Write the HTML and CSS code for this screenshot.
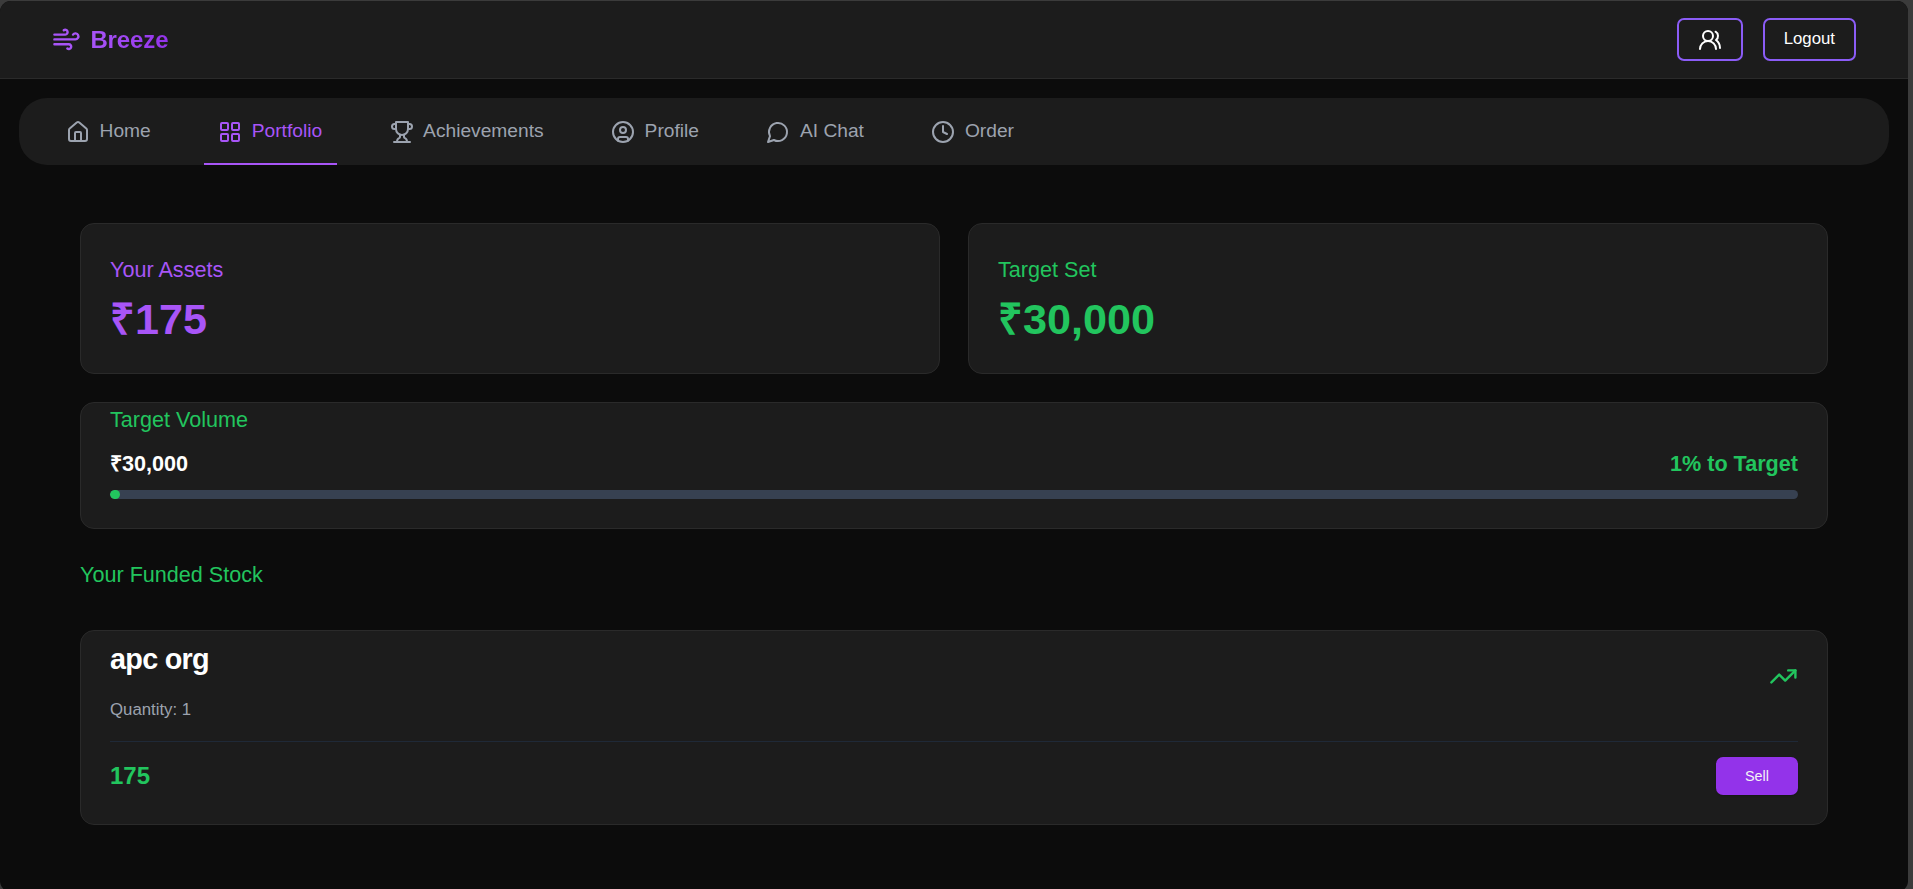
FILE: index.html
```
<!DOCTYPE html>
<html lang="en">
<head>
  <meta charset="UTF-8">
  <meta name="viewport" content="width=device-width, initial-scale=1.0">
  <title>Breeze - Portfolio</title>
  <link rel="stylesheet" href="styles.css">
</head>
<body>
  <div class="app">
    <header class="header">
      <div class="logo">
        <svg class="icon icon-lg" viewBox="0 0 24 24"><path d="M12.8 19.6A2 2 0 1 0 14 16H2"/><path d="M17.5 8a2.5 2.5 0 1 1 2 4H2"/><path d="M9.8 4.4A2 2 0 1 1 11 8H2"/></svg>
        <span class="logo-text">Breeze</span>
      </div>
      <div class="header-actions">
        <button class="btn-outline" aria-label="Users">
          <svg class="icon" viewBox="0 0 24 24"><path d="M18 21a8 8 0 0 0-16 0"/><circle cx="10" cy="8" r="5"/><path d="M22 20c0-3.37-2-6.5-4-8a5 5 0 0 0-.45-8.3"/></svg>
        </button>
        <button class="btn-outline btn-logout">Logout</button>
      </div>
    </header>

    <nav class="nav">
      <a class="nav-item">
        <svg class="icon" viewBox="0 0 24 24"><path d="M15 21v-8a1 1 0 0 0-1-1h-4a1 1 0 0 0-1 1v8"/><path d="M3 10a2 2 0 0 1 .709-1.528l7-5.999a2 2 0 0 1 2.582 0l7 5.999A2 2 0 0 1 21 10v9a2 2 0 0 1-2 2H5a2 2 0 0 1-2-2z"/></svg>
        <span>Home</span>
      </a>
      <a class="nav-item active">
        <svg class="icon" viewBox="0 0 24 24"><rect x="3" y="3" width="7" height="7" rx="1"/><rect x="14" y="3" width="7" height="7" rx="1"/><rect x="14" y="14" width="7" height="7" rx="1"/><rect x="3" y="14" width="7" height="7" rx="1"/></svg>
        <span>Portfolio</span>
      </a>
      <a class="nav-item">
        <svg class="icon" viewBox="0 0 24 24"><path d="M6 9H4.5a2.5 2.5 0 0 1 0-5H6"/><path d="M18 9h1.5a2.5 2.5 0 0 0 0-5H18"/><path d="M4 22h16"/><path d="M10 14.66V17c0 .55-.47.98-.97 1.21C7.85 18.75 7 20.24 7 22"/><path d="M14 14.66V17c0 .55.47.98.97 1.21C16.15 18.75 17 20.24 17 22"/><path d="M18 2H6v7a6 6 0 0 0 12 0V2Z"/></svg>
        <span>Achievements</span>
      </a>
      <a class="nav-item">
        <svg class="icon" viewBox="0 0 24 24"><circle cx="12" cy="12" r="10"/><circle cx="12" cy="10" r="3"/><path d="M7 20.662V19a2 2 0 0 1 2-2h6a2 2 0 0 1 2 2v1.662"/></svg>
        <span>Profile</span>
      </a>
      <a class="nav-item">
        <svg class="icon" viewBox="0 0 24 24"><path d="M7.9 20A9 9 0 1 0 4 16.1L2 22Z"/></svg>
        <span>AI Chat</span>
      </a>
      <a class="nav-item">
        <svg class="icon" viewBox="0 0 24 24"><circle cx="12" cy="12" r="10"/><polyline points="12 6 12 12 16 14"/></svg>
        <span>Order</span>
      </a>
    </nav>

    <main class="content">
      <div class="summary">
        <div class="card">
          <h3 class="card-title purple">Your Assets</h3>
          <p class="amount purple">₹175</p>
        </div>
        <div class="card">
          <h3 class="card-title">Target Set</h3>
          <p class="amount">₹30,000</p>
        </div>
      </div>

      <div class="card volume">
        <h3 class="card-title">Target Volume</h3>
        <div class="volume-row">
          <span class="volume-value">₹30,000</span>
          <span>1% to Target</span>
        </div>
        <div class="progress">
          <div class="progress-fill" style="width: 0.583%"></div>
        </div>
      </div>

      <h3 class="card-title">Your Funded Stock</h3>

      <div class="card stock">
        <div class="stock-top">
          <div>
            <h2 class="stock-name">apc org</h2>
            <p class="quantity">Quantity: 1</p>
          </div>
          <svg class="icon icon-lg" viewBox="0 0 24 24"><path d="M16 7h6v6"/><path d="m22 7-8.5 8.5-5-5L2 17"/></svg>
        </div>
        <div class="stock-bottom">
          <span class="price">175</span>
          <button class="btn-sell">Sell</button>
        </div>
      </div>
    </main>
  </div>
</body>
</html>
```
FILE: styles.css
```
* {
  box-sizing: border-box;
  margin: 0;
  padding: 0;
}
body {
  font-family: "Liberation Sans", Arial, sans-serif;
  background: #3b3b3b;
  padding: 1px 5px 0 0;
  height: 100vh;
  overflow: hidden;
}
.app {
  height: 891px;
  background: #0c0c0c;
  border-radius: 11px;
  overflow: hidden;
}
.icon {
  width: 24px;
  height: 24px;
  flex-shrink: 0;
  fill: none;
  stroke: currentColor;
  stroke-width: 2;
  stroke-linecap: round;
  stroke-linejoin: round;
}
.icon-lg {
  width: 28.8px;
  height: 28.8px;
}

/* header */
.header {
  display: flex;
  justify-content: space-between;
  align-items: center;
  height: 78px;
  padding: 0 52px;
  background: #1c1c1c;
  border-bottom: 1px solid #2a2a2a;
}
.logo {
  display: flex;
  align-items: center;
  gap: 9.6px;
  color: #a855f7;
}
.logo-text {
  font-size: 24px;
  line-height: 33.6px;
  font-weight: bold;
  letter-spacing: -0.1px;
  background: linear-gradient(to right, #a855f7, #9333ea);
  -webkit-background-clip: text;
  background-clip: text;
  color: transparent;
}
.header-actions {
  display: flex;
  gap: 20px;
}
.btn-outline {
  display: flex;
  align-items: center;
  height: 43px;
  padding: 0 19px;
  background: transparent;
  border: 2px solid #8b5cf6;
  border-radius: 7px;
  color: #fff;
  font-family: inherit;
  font-size: 16.8px;
}
.btn-logout {
  padding-bottom: 2px;
}

/* navigation */
.nav {
  display: flex;
  gap: 38.6px;
  height: 67px;
  margin: 19px 19px 0;
  padding: 0 32.6px;
  background: #1c1c1c;
  border-radius: 28px;
}
.nav-item {
  display: flex;
  align-items: center;
  gap: 9.6px;
  padding: 2px 14.4px 0;
  border-bottom: 2px solid transparent;
  color: #9ca3af;
  font-size: 19.2px;
}
.nav-item span {
  margin-bottom: 1px;
}
.nav-item.active {
  color: #a855f7;
  border-bottom-color: #a855f7;
}

/* content */
.content {
  margin: 58px 80px 0;
  color: #22c55e;
}
.summary {
  display: grid;
  grid-template-columns: 1fr 1fr;
  gap: 28px;
}
.card {
  padding: 28.8px 29px;
  background: #1c1c1c;
  border: 1px solid #2a2a2a;
  border-radius: 14px;
}
.card-title {
  font-size: 21.6px;
  line-height: 33.6px;
  font-weight: normal;
}
.purple {
  color: #a855f7;
}
.amount {
  margin: 8.6px 0 1px;
  font-size: 43.2px;
  line-height: 48px;
  font-weight: bold;
}
.volume {
  margin: 28.4px 0 28.8px;
  padding-top: 0;
}
.volume-row {
  display: flex;
  justify-content: space-between;
  margin: 10.4px 0 8.8px;
  font-size: 21.6px;
  line-height: 33.6px;
  font-weight: bold;
}
.volume-value {
  color: #fff;
}
.progress {
  height: 9.6px;
  background: #374151;
  border-radius: 5px;
  overflow: hidden;
}
.progress-fill {
  height: 100%;
  background: #22c55e;
  border-radius: 5px;
}

/* stock card */
.stock {
  margin-top: 38.4px;
  padding-top: 0;
}
.stock-top {
  display: flex;
  justify-content: space-between;
  align-items: center;
  padding-bottom: 18.6px;
}
.stock-name {
  color: #fff;
  font-size: 28.8px;
  line-height: 57px;
  letter-spacing: -0.025em;
}
.quantity {
  margin-top: 10.4px;
  color: #9ca3af;
  font-size: 16.8px;
  line-height: 24px;
}
.stock-bottom {
  display: flex;
  justify-content: space-between;
  align-items: center;
  padding-top: 15.4px;
  border-top: 1px solid #1f2937;
}
.price {
  font-size: 24px;
  font-weight: bold;
}
.btn-sell {
  width: 82px;
  height: 38.4px;
  background: #9333ea;
  border: none;
  border-radius: 7px;
  box-shadow: 0 1px 2px rgba(0, 0, 0, 0.2);
  color: #f3f4f6;
  font-family: inherit;
  font-size: 14.4px;
}
```
